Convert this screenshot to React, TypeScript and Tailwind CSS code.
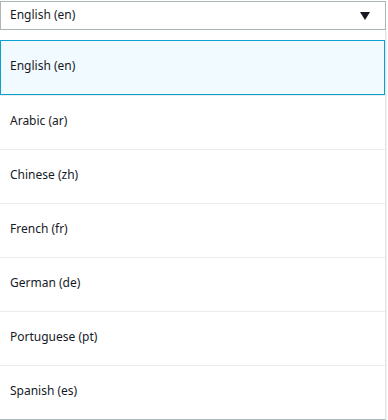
const languages = [
  "English (en)",
  "Arabic (ar)",
  "Chinese (zh)",
  "French (fr)",
  "German (de)",
  "Portuguese (pt)",
  "Spanish (es)",
];

export default function App() {
  return (
    <div
      className="relative h-[420px] w-[388px] overflow-hidden bg-white pt-px text-[12px] text-[#16191f]"
      style={{ fontFamily: '"Noto Sans", "Open Sans", sans-serif' }}
    >
      {/* Select trigger */}
      <div className="flex h-[29px] w-[386px] items-center justify-between border border-[#aab7b8] bg-white pl-[9px] pr-[15px]">
        <span className="-mt-px">English (en)</span>
        <svg width="10" height="8" viewBox="0 0 10 8" className="text-[#16191f]">
          <path d="M0 0 H10 L5 8 Z" fill="currentColor" />
        </svg>
      </div>

      {/* Dropdown list */}
      <div className="relative z-10 w-[386px] border-r border-b border-[#aab7b8] border-r-[#e2e5e6] bg-white pt-[10px] shadow-[0_1px_2px_rgba(0,0,0,0.15)]">
        <ul>
          {languages.map((lang, i) => (
            <li
              key={lang}
              className={
                i === 0
                  ? "flex h-[55px] items-center border border-[#0aa1d0] bg-[#f1faff] pb-[3px] pl-[9px]"
                  : "flex h-[54px] items-center border-t border-[#e9ebed] pb-[3px] pl-[10px]"
              }
            >
              {lang}
            </li>
          ))}
        </ul>
      </div>
    </div>
  );
}
